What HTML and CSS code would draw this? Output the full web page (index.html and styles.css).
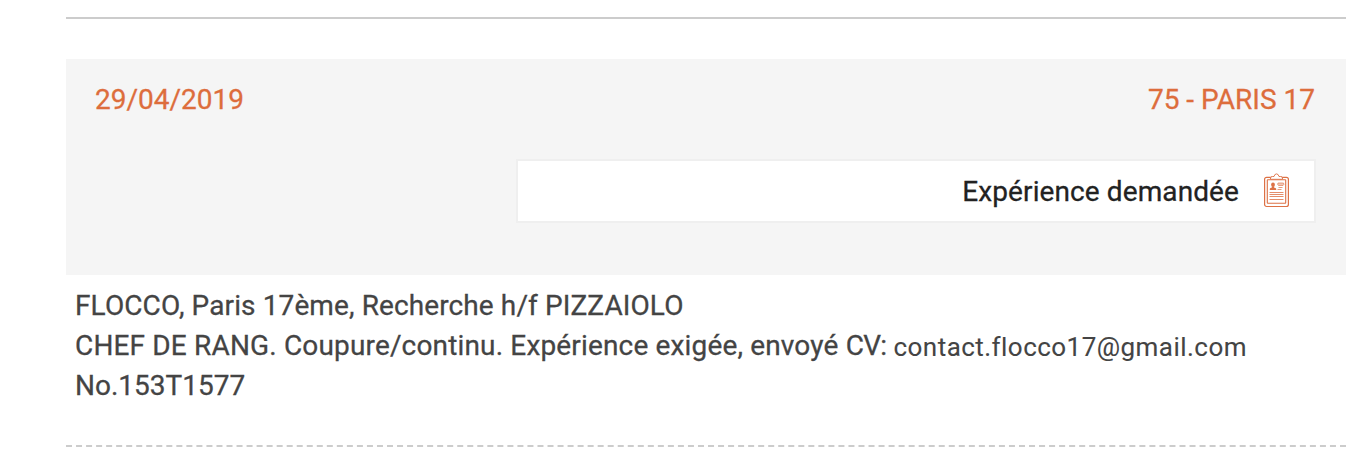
FILE: index.html
```html
<!DOCTYPE html>
<html lang="fr">
<head>
<meta charset="utf-8">
<title>Offre d'emploi</title>
<link rel="stylesheet" href="styles.css">
</head>
<body>
<article class="offer">
  <header class="summary">
    <div class="meta"><span class="date">29/04/2019</span><span class="place">75 - PARIS 17</span></div>
    <div class="experience">
      <span class="label">Expérience demandée</span>
      <svg class="icon" viewBox="0 0 25 35" fill="none" stroke="#dd7145">
        <rect x=".6" y="4.300" width="23.800" height="29.200" rx="2" stroke-width="1.200"/>
        <rect x="3.300" y="6.800" width="18.400" height="23.500" rx=".5" stroke-width="1.100"/>
        <path d="M6.500 6.300V5q0-1.500 2-1.500h1.500q.6-2.600 2.500-2.600T15 3.500h1.500q2 0 2 1.500v1.300z" fill="#fff" stroke-width=".9"/>
        <path d="M5.500 19.500h14M5.500 21.500h14M5.500 23.500h14M5.500 26.500h14" stroke-width=".8"/>
        <path d="M14.500 12.500q-1.500-1-.5-2.500h5.500q1 1.500-.5 2.500z" fill="#dd7145" fill-opacity=".5" stroke-width=".8" opacity=".8"/>
        <path d="M14.500 14.500h4M13.500 16.500h4" stroke-width="1" opacity=".7"/>
        <ellipse cx="9" cy="11.800" rx="1.900" ry="2.200" fill="#dd7145" stroke="none"/>
        <path d="M5.800 17v-1.200q.3-1 2.200-1.300v-1h2v1q1.900.3 2.200 1.300V17z" fill="#dd7145" stroke="none"/>
      </svg>
    </div>
  </header>
  <div class="description">
    <p>FLOCCO, Paris 17ème, Recherche h/f PIZZAIOLO</p>
    <p class="details">CHEF DE RANG. Coupure/continu. Expérience exigée, envoyé <span class="cv">CV:</span> <span class="mail">contact.flocco17@gmail.com</span></p>
    <p class="reference">No.153T1577</p>
  </div>
</article>
</body>
</html>
```
FILE: styles.css
```css
* { box-sizing: border-box; }
body { margin: 0; background: #fff; font-family: Roboto, sans-serif; font-size: 28px; font-weight: 400; color: #444; overflow: hidden; }
.offer { margin: 17px 24px 0 66px; height: 430px; border-top: 2px solid #ccc; border-bottom: 2px dashed #ccc; padding-top: 40px; white-space: nowrap; -webkit-text-stroke: 0.28px currentColor; }
.summary { height: 216px; background: #f5f5f5; padding: 21px 31px 0 29px; }
.meta { display: flex; justify-content: space-between; line-height: 40px; color: #dd6d3c; }
.experience { display: flex; align-items: center; justify-content: flex-end; width: 800px; height: 64px; margin: 39px -1px 0 auto; padding-right: 25px; gap: 25px; background: #fff; border: 2px solid #efefef; color: #222; }
.label { letter-spacing: 0.1px; }
.icon { width: 25px; height: 35px; margin-top: -1px; }
.description { padding: 11px 0 0 9px; letter-spacing: 0.11px; }
.description p { margin: 0; line-height: 40px; }
.description .details { letter-spacing: 0.16px; }
.description .reference { letter-spacing: 0; }
.cv { letter-spacing: -0.7px; }
.mail { display: inline-block; line-height: 38px; vertical-align: -1px; font-size: 26px; letter-spacing: 0.46px; -webkit-text-stroke: 0.1px currentColor; }
```
